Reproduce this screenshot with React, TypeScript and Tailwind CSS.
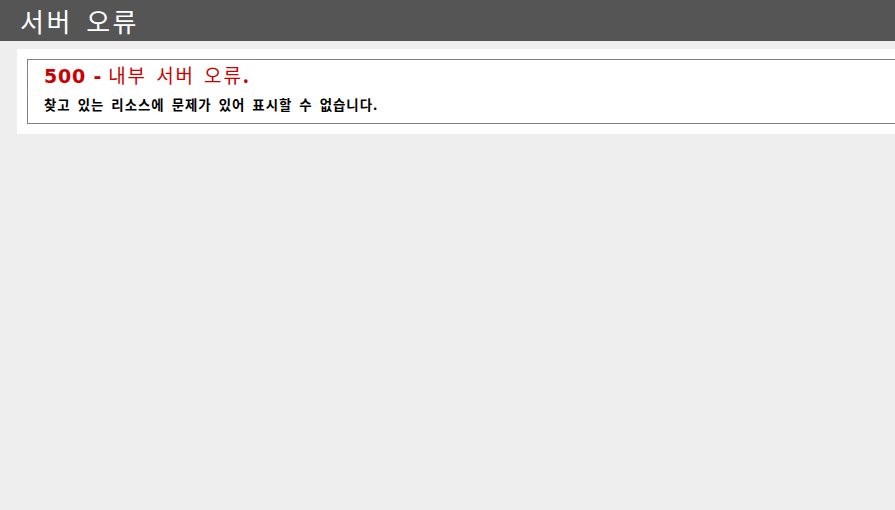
import React from "react";

export default function App() {
  return (
    <div className="w-[895px] h-[510px] overflow-hidden bg-[#eeeeee] flex flex-col">
      <div className="h-[41px] shrink-0 bg-[#555555] pl-[20px] flex items-center">
        <h1 className="m-0 text-white text-[26px] leading-none font-normal tracking-[2.5px] [word-spacing:5px] [font-family:'Noto_Sans_CJK_KR','Noto_Sans',sans-serif]">
          서버 오류
        </h1>
      </div>
      <div className="ml-[17px] mt-[8px] w-[1000px] bg-white p-[10px] shrink-0">
        <div className="border border-[#808080] h-[65px] pl-[16px] pr-[15px] pt-[2px] [font-family:'DejaVu_Sans','Noto_Sans_CJK_KR',sans-serif]">
          <h2 className="m-0 text-[#cc0000] text-[19px] leading-[26px] font-normal whitespace-nowrap">
            <span className="font-bold tracking-[0.8px]">500 -</span>{" "}
            <span className="[font-family:'Noto_Sans_CJK_KR',sans-serif] tracking-[1.9px] [word-spacing:3px]">내부 서버 오류<span className="font-bold">.</span></span>
          </h2>
          <h3 className="m-0 mt-[6px] text-black text-[13.4px] leading-[18px] font-bold whitespace-nowrap [font-family:'Noto_Sans_CJK_KR',sans-serif] tracking-[1px] [word-spacing:3px]">
            찾고 있는 리소스에 문제가 있어 표시할 수 없습니다.
          </h3>
        </div>
      </div>
    </div>
  );
}
